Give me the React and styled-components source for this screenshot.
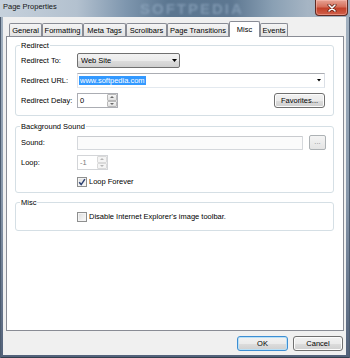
import styled, { createGlobalStyle } from "styled-components";

const GlobalStyle = createGlobalStyle`
  html, body {
    margin: 0;
    padding: 0;
  }
  body {
    font-family: "Liberation Sans", Arial, sans-serif;
    font-size: 7.5px;
    color: #000;
  }
  * {
    box-sizing: border-box;
  }
`;

const TABS = [
  { name: "General", width: 33 },
  { name: "Formatting", width: 41 },
  { name: "Meta Tags", width: 43 },
  { name: "Scrollbars", width: 41 },
  { name: "Page Transitions", width: 62 },
  { name: "Misc", width: 31, active: true },
  { name: "Events", width: 28 },
];

const ArrowDown = ({ color = "#000", w = 5, h = 3 }) => (
  <svg width={w} height={h} viewBox={`0 0 ${w} ${h}`}>
    <path d={`M0 0H${w}L${w / 2} ${h}Z`} fill={color} />
  </svg>
);

const ArrowUp = ({ color = "#000", w = 5, h = 3 }) => (
  <svg width={w} height={h} viewBox={`0 0 ${w} ${h}`}>
    <path d={`M0 ${h}H${w}L${w / 2} 0Z`} fill={color} />
  </svg>
);

const Spinner = ({ value, width, disabled }) => (
  <SpinBox width={width} disabled={disabled}>
    <SpinText disabled={disabled}>{value}</SpinText>
    <SpinButtons>
      <SpinHalf disabled={disabled}>
        <ArrowUp color={disabled ? "#b5b5b5" : "#6a6a6a"} w={4} h={2} />
      </SpinHalf>
      <SpinHalf disabled={disabled}>
        <ArrowDown color={disabled ? "#b5b5b5" : "#6a6a6a"} w={4} h={2} />
      </SpinHalf>
    </SpinButtons>
  </SpinBox>
);

const CheckBox = ({ checked, label }) => (
  <CheckWrap>
    <Box>
      {checked && (
        <svg width="8" height="8" viewBox="0 0 8 8">
          <path
            d="M1.2 4.2L3.2 6.6L6.9 1.2"
            fill="none"
            stroke="#2c4172"
            strokeWidth="1.5"
          />
        </svg>
      )}
    </Box>
    <span>{label}</span>
  </CheckWrap>
);

const App = () => {
  return (
    <>
      <GlobalStyle />
      <Window>
        <TitleBar>
          <Title>Page Properties</Title>
          <Watermark>SOFTPEDIA</Watermark>
          <CloseButton>
            <svg width="10" height="8" viewBox="0 0 10 8">
              <path
                d="M2 1L8 7M8 1L2 7"
                stroke="#5a1c12"
                strokeWidth="3"
                strokeLinecap="round"
              />
              <path
                d="M2 1L8 7M8 1L2 7"
                stroke="#fff"
                strokeWidth="1.6"
                strokeLinecap="round"
              />
            </svg>
          </CloseButton>
        </TitleBar>
        <Frame>
          <Client>
            <TabStrip>
              {TABS.map((tab) => (
                <Tab key={tab.name} width={tab.width} $active={tab.active}>
                  {tab.name}
                </Tab>
              ))}
            </TabStrip>
            <Panel>
              <GroupBox $pad="7px 8px 7px 5px">
                <Legend>Redirect</Legend>
                <Row>
                  <Label>Redirect To:</Label>
                  <Select>
                    <span>Web Site</span>
                    <ArrowDown />
                  </Select>
                </Row>
                <Row>
                  <Label>Redirect URL:</Label>
                  <Combo>
                    <Selection>www.softpedia.com</Selection>
                    <ArrowDown w={4} h={2.5} />
                  </Combo>
                </Row>
                <Row>
                  <Label>Redirect Delay:</Label>
                  <Spinner value="0" width={41} />
                  <Spacer />
                  <Button width={51}>Favorites...</Button>
                </Row>
              </GroupBox>

              <GroupBox $top={10} $pad="8px 7px 4px 5px">
                <Legend>Background Sound</Legend>
                <Row>
                  <Label>Sound:</Label>
                  <TextInput />
                  <SmallButton>...</SmallButton>
                </Row>
                <Row>
                  <Label>Loop:</Label>
                  <Spinner value="-1" width={31} disabled />
                </Row>
                <Row $h={13}>
                  <Label />
                  <CheckBox checked label="Loop Forever" />
                </Row>
              </GroupBox>

              <GroupBox $top={9} $pad="8px 8px 8px 5px">
                <Legend>Misc</Legend>
                <Row $h={11}>
                  <Label />
                  <CheckBox label="Disable Internet Explorer's image toolbar." />
                </Row>
              </GroupBox>
            </Panel>
            <ButtonRow>
              <Button width={51} $default>
                OK
              </Button>
              <Button width={50}>Cancel</Button>
            </ButtonRow>
          </Client>
        </Frame>
      </Window>
    </>
  );
};

const Window = styled.div`
  width: 350px;
  height: 358px;
  display: flex;
  flex-direction: column;
  overflow: hidden;
  background: linear-gradient(to bottom, #a4b3c2 0%, #8797aa 55%, #53627a 100%);
`;

const TitleBar = styled.div`
  position: relative;
  height: 17px;
  flex: none;
  display: flex;
  align-items: flex-start;
  background: linear-gradient(
    to right,
    #c6d1dc 0%,
    #b3c1cf 22%,
    #7e96ae 36%,
    #5b7690 48%,
    #5d7791 66%,
    #8aa0b4 78%,
    #a6b5c4 88%,
    #9aaabb 100%
  );
`;

const Title = styled.span`
  padding: 2px 0 0 3px;
  line-height: 10px;
  font-size: 7.5px;
  color: #151515;
`;

const Watermark = styled.span`
  position: absolute;
  left: 140px;
  top: 0;
  line-height: 17px;
  font-family: "Liberation Sans", Arial, sans-serif;
  font-weight: bold;
  font-size: 15px;
  letter-spacing: 2px;
  color: rgba(160, 184, 208, 0.5);
  filter: blur(0.8px);
`;

const CloseButton = styled.div`
  margin-left: auto;
  margin-right: 2px;
  width: 33px;
  height: 16px;
  border: 1px solid #5e2a22;
  border-top: none;
  border-radius: 0 0 4px 4px;
  display: flex;
  align-items: center;
  justify-content: center;
  background: linear-gradient(
    to bottom,
    #e7a394 0%,
    #d5705c 45%,
    #c2412a 55%,
    #d0604a 100%
  );
  box-shadow: inset 0 0 0 1px rgba(255, 200, 190, 0.45);
`;

const Frame = styled.div`
  flex: 1;
  display: flex;
  padding: 0 4px 3px 3px;
  box-shadow: inset 1px 0 0 #4d5c70, inset -1px 0 0 #4d5c70,
    inset 0 -1px 0 #33404f;
`;

const Client = styled.div`
  flex: 1;
  display: flex;
  flex-direction: column;
  padding: 4px 2px 4px 3px;
  background: #f0f0f0;
`;

const TabStrip = styled.div`
  display: flex;
  align-items: flex-end;
  height: 15px;
  padding-left: 3px;
`;

const Tab = styled.div`
  position: relative;
  width: ${({ width }) => width}px;
  height: ${({ $active }) => ($active ? 16 : 13)}px;
  margin-bottom: ${({ $active }) => ($active ? -1 : 0)}px;
  padding-bottom: ${({ $active }) => ($active ? 1 : 0)}px;
  z-index: ${({ $active }) => ($active ? 1 : 0)};
  display: flex;
  align-items: center;
  justify-content: center;
  white-space: nowrap;
  border: 1px solid #898c95;
  border-bottom: none;
  border-radius: 2px 2px 0 0;
  background: ${({ $active }) =>
    $active ? "#fff" : "linear-gradient(to bottom, #f4f4f4, #e2e2e2)"};
`;

const Panel = styled.div`
  height: 295px;
  flex: none;
  display: flex;
  flex-direction: column;
  padding: 8px 9px 0 8px;
  border: 1px solid #898c95;
  background: #fff;
`;

const GroupBox = styled.div`
  position: relative;
  display: flex;
  flex-direction: column;
  gap: 5px;
  margin-top: ${({ $top }) => $top || 0}px;
  padding: ${({ $pad }) => $pad};
  border: 1px solid #d5dfe5;
  border-radius: 3px;
`;

const Legend = styled.span`
  position: absolute;
  top: -5px;
  left: 4px;
  padding: 0 1px;
  line-height: 9px;
  background: #fff;
`;

const Row = styled.div`
  display: flex;
  align-items: center;
  height: ${({ $h }) => $h || 15}px;
`;

const Label = styled.span`
  flex: none;
  width: 56px;
  white-space: nowrap;
`;

const Spacer = styled.div`
  flex: 1;
`;

const Select = styled.div`
  width: 103px;
  height: 15px;
  display: flex;
  align-items: center;
  justify-content: space-between;
  padding: 0 2px 0 3px;
  border: 1px solid #707070;
  border-radius: 2px;
  background: linear-gradient(
    to bottom,
    #f2f2f2 0%,
    #ebebeb 50%,
    #dddddd 51%,
    #cfcfcf 100%
  );
`;

const Combo = styled.div`
  flex: 1;
  height: 15px;
  display: flex;
  align-items: center;
  justify-content: space-between;
  padding: 0 3px 0 1px;
  border: 1px solid #abadb3;
  border-left-color: #e2e3ea;
  border-bottom-color: #e3e9ef;
  border-right-color: #dbdfe6;
  background: #fff;
`;

const Selection = styled.span`
  padding: 0 1px;
  line-height: 9px;
  color: #fff;
  background: #3399ff;
`;

const SpinBox = styled.div`
  width: ${({ width }) => width}px;
  height: 15px;
  display: flex;
  align-items: stretch;
  border: 1px solid ${({ disabled }) => (disabled ? "#d3d5d8" : "#abadb3")};
  background: #fff;
`;

const SpinText = styled.span`
  flex: 1;
  display: flex;
  align-items: center;
  padding-left: 2px;
  color: ${({ disabled }) => (disabled ? "#7a7a7a" : "#000")};
`;

const SpinButtons = styled.div`
  width: 10px;
  display: flex;
  flex-direction: column;
`;

const SpinHalf = styled.div`
  flex: 1;
  display: flex;
  align-items: center;
  justify-content: center;
  border: 1px solid ${({ disabled }) => (disabled ? "#dadada" : "#b9b9b9")};
  border-radius: 1px;
  background: ${({ disabled }) =>
    disabled ? "#f4f4f4" : "linear-gradient(to bottom, #f5f5f5, #e0e0e0)"};
`;

const TextInput = styled.div`
  width: 226px;
  height: 14px;
  border: 1px solid #d5d8dc;
  border-top-color: #c9cbcf;
  border-radius: 1px;
  background: #fbfbfb;
`;

const SmallButton = styled.div`
  margin-left: auto;
  width: 17px;
  height: 15px;
  display: flex;
  align-items: center;
  justify-content: center;
  padding-bottom: 2px;
  color: #8a8a8a;
  border: 1px solid #adb2b5;
  border-radius: 2px;
  background: linear-gradient(to bottom, #f4f4f4, #e4e4e4);
`;

const Button = styled.div`
  width: ${({ width }) => width}px;
  height: 15px;
  display: flex;
  align-items: center;
  justify-content: center;
  white-space: nowrap;
  border: 1px solid ${({ $default }) => ($default ? "#3d8ed3" : "#707070")};
  border-radius: 3px;
  box-shadow: ${({ $default }) =>
    $default ? "inset 0 0 0 1px #b9e0f7" : "inset 0 0 0 1px #fcfcfc"};
  background: linear-gradient(
    to bottom,
    #f2f2f2 0%,
    #ebebeb 50%,
    #dddddd 51%,
    #cfcfcf 100%
  );
`;

const ButtonRow = styled.div`
  display: flex;
  justify-content: flex-end;
  gap: 5px;
  margin-top: 5px;
  padding-right: 1px;
`;

const CheckWrap = styled.div`
  display: flex;
  align-items: center;
  gap: 2px;
  white-space: nowrap;
`;

const Box = styled.span`
  width: 10px;
  height: 10px;
  display: flex;
  align-items: center;
  justify-content: center;
  border: 1px solid #8e8f8f;
  background: linear-gradient(135deg, #dcdcdc, #fbfbfb);
  box-shadow: inset 0 0 0 1px #f4f4f4;
`;

export default App;
